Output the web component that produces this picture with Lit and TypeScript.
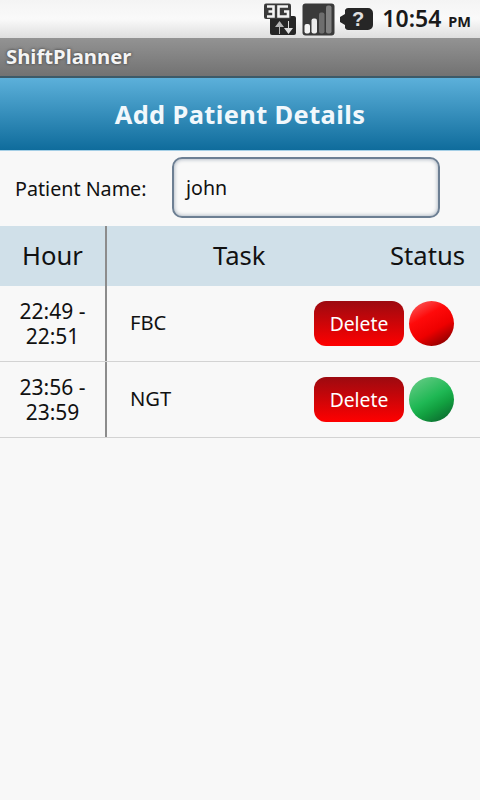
import { LitElement, html, css, svg } from "lit";
import { customElement } from "lit/decorators.js";

const rows = [
  { from: "22:49 -", to: "22:51", task: "FBC", cls: "red" },
  { from: "23:56 -", to: "23:59", task: "NGT", cls: "green" },
];

const icon3g = svg`<svg class="ic" width="33" height="33" viewBox="0 0 33 33">
  <rect x="6" y="13" width="26" height="19" rx="2" fill="#262626"/>
  <rect x="0" y="0.5" width="27" height="15.5" rx="2" fill="#3a3a3a"/>
  <path d="M3 3.5h6.5v10H3M4.5 8.5h5M24 3.5h-9.5v10H24V8.5h-4" fill="none" stroke="#f4f4f4" stroke-width="2.6"/>
  <path d="M15 31v-7h-4l4.5-6 4.500 6h-4v7z" fill="#b5b5b5"/>
  <path d="M24 18v7h-4l4.500 6 4.500-6h-4v-7z" fill="#dedede"/>
</svg>`;

const iconSignal = svg`<svg class="ic" width="33" height="33" viewBox="0 0 33 33">
  <rect x="0.5" y="0.500" width="32" height="32" rx="3" fill="#3a3a3a"/>
  <rect x="2.500" y="21" width="5.500" height="9.500" rx="2" fill="#f4f4f4"/>
  <rect x="9.500" y="15.500" width="5.500" height="15" rx="2" fill="#eeeeee"/>
  <rect x="17" y="9.500" width="5.500" height="21" rx="2" fill="#6e6e6e"/>
  <rect x="24" y="2.500" width="5.500" height="28" rx="2" fill="#808080"/>
</svg>`;

const iconBattery = svg`<svg class="ic" width="33" height="24" viewBox="0 0 33 24">
  <path d="M8 1h20a5 5 0 0 1 5 5v12a5 5 0 0 1-5 5H8a4 4 0 0 1-3-2v-3l-5-3v-5l5-3V3a4 4 0 0 1 3-2z" fill="#262626"/>
  <text x="18" y="19" text-anchor="middle" class="q">?</text>
</svg>`;

@customElement("app-root")
export class AppRoot extends LitElement {
  static styles = css`
    :host {
      display: block;
      width: 480px;
      height: 800px;
      background: #f8f8f8;
      font-family: "Noto Sans", "Open Sans", sans-serif;
      color: #111;
      overflow: hidden;
    }
    .status {
      height: 38px;
      box-sizing: border-box;
      background: linear-gradient(#f4f4f4, #fafafa 50%, #dedede);
      display: flex;
      align-items: center;
      justify-content: flex-end;
      padding-right: 9px;
    }
    .ic { display: block; flex: none; }
    .icons { display: flex; align-items: center; gap: 5px; margin-right: 9px; }
    .q { font: bold 20px "Liberation Sans", sans-serif; fill: #e0e0e0; }
    .time { font-size: 23px; font-weight: 600; color: #1a1a1a; line-height: 38px; white-space: nowrap; }
    .time small { font-size: 14.5px; font-weight: 700; margin-left: 1px; }
    .title {
      height: 38px;
      background: linear-gradient(#939393, #727272);
      display: flex;
      align-items: center;
      padding: 0 0 2px 6px;
      color: #f4f4f4;
      font-size: 20.3px;
      font-weight: 700;
      text-shadow: 0 0 3px #333;
      box-sizing: border-box;
    }
    .rule { height: 2px; background: #3d5a68; }
    .head {
      height: 72px;
      background: linear-gradient(#5cb0da, #0f6c9c);
      display: flex;
      align-items: center;
      justify-content: center;
      color: #f2f8fc;
      font-size: 25.4px;
      font-weight: 700;
      letter-spacing: 0.4px;
      border-bottom: 1px solid #a5cfe6;
    }
    .form {
      height: 75px;
      display: flex;
      align-items: center;
      padding-left: 15px;
      box-sizing: border-box;
    }
    .form label { width: 157px; font-size: 19.7px; flex: none; }
    .input {
      width: 268px;
      height: 61px;
      box-sizing: border-box;
      margin-top: -2px;
      border: 2px solid #6d7f93;
      border-radius: 10px;
      background: #f9f9f9;
      box-shadow: inset 0 0 4px #9aa6b4;
      font-size: 19.6px;
      display: flex;
      align-items: center;
      padding-left: 12px;
    }
    .grid-head, .row {
      display: grid;
      grid-template-columns: 105px 2px 1fr;
    }
    .grid-head { height: 60px; background: #d0e0e9; font-size: 25.6px; }
    .hour, .when { display: flex; align-items: center; justify-content: center; text-align: center; }
    .hour { padding-bottom: 1px; }
    .when { font-size: 21px; line-height: 25px; }
    .div { background: #8c8c8c; }
    .heads { display: flex; align-items: center; justify-content: space-between; padding: 0 15px 1px 106px; }
    .row { height: 76px; box-sizing: border-box; border-bottom: 1px solid #d3d3d3; }
    .cell {
      display: flex;
      align-items: center;
      padding: 0 26px 0 23px;
      font-size: 20.2px;
    }
    .task { flex: 1; margin-top: -3px; }
    .del {
      width: 90px;
      height: 45px;
      border-radius: 12px;
      background: linear-gradient(#9c0a10, #ff0000);
      color: #fff;
      font-size: 19.3px;
      display: flex;
      align-items: center;
      justify-content: center;
    }
    .dot { width: 45px; height: 45px; border-radius: 50%; margin-left: 5px; }
    .dot.red { background: linear-gradient(150deg, #f86a6a 0%, #ff0a0a 35%, #ee0000 62%, #6a0000 100%); }
    .dot.green { background: linear-gradient(150deg, #6fce8c 0%, #1fb854 48%, #12a040 65%, #0a5a2a 100%); }
  `;

  render() {
    return html`
      <div class="status">
        <div class="icons">${icon3g}${iconSignal}${iconBattery}</div>
        <div class="time">10:54 <small>PM</small></div>
      </div>
      <div class="title">ShiftPlanner</div>
      <div class="rule"></div>
      <div class="head">Add Patient Details</div>
      <div class="form">
        <label>Patient Name:</label>
        <div class="input">john</div>
      </div>
      <div class="grid-head">
        <div class="hour">Hour</div>
        <div class="div"></div>
        <div class="heads"><span>Task</span><span>Status</span></div>
      </div>
      ${rows.map(
        (r) => html`<div class="row">
          <div class="when">${r.from}<br />${r.to}</div>
          <div class="div"></div>
          <div class="cell">
            <span class="task">${r.task}</span>
            <div class="del">Delete</div>
            <div class="dot ${r.cls}"></div>
          </div>
        </div>`
      )}
    `;
  }
}
